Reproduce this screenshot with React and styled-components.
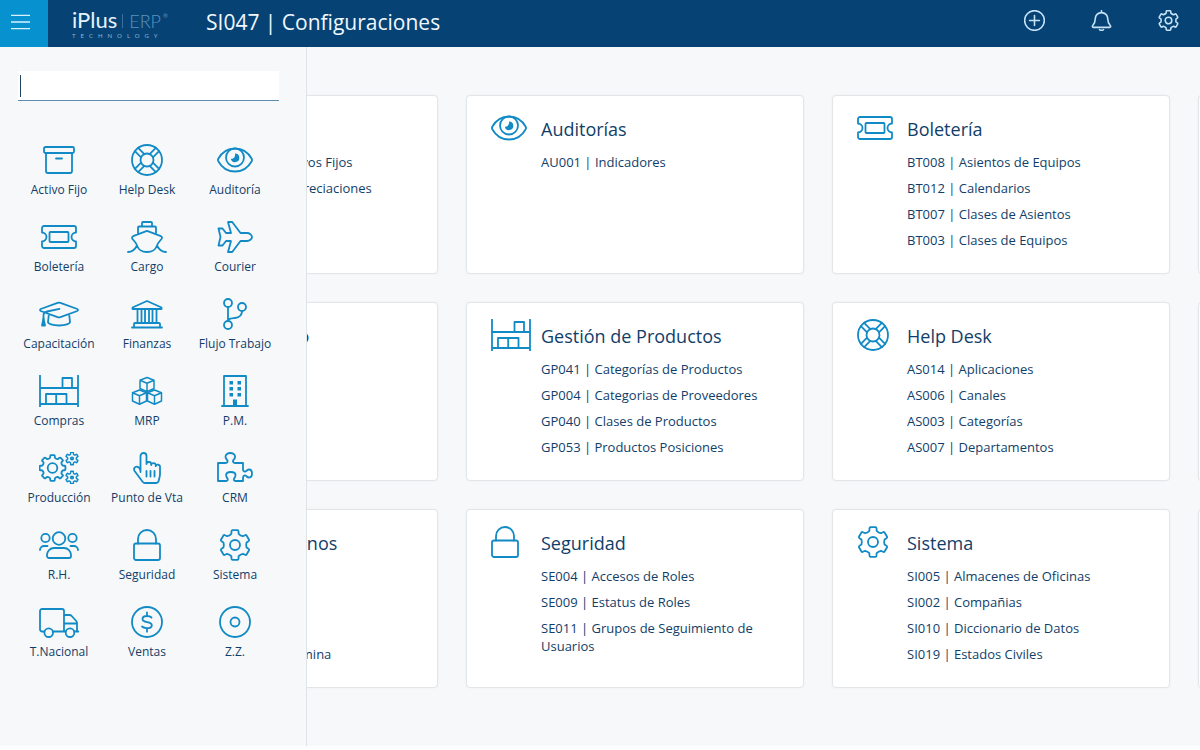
import styled, { createGlobalStyle } from "styled-components";

const gear = (cx, cy, teeth, outer, root) => {
  const step = 360 / teeth;
  const at = (deg, r) => {
    const a = ((deg - 90) * Math.PI) / 180;
    return `${(cx + r * Math.cos(a)).toFixed(2)} ${(cy + r * Math.sin(a)).toFixed(2)}`;
  };
  let d = "";
  for (let i = 0; i < teeth; i++) {
    const a = i * step;
    d += `${i ? "L" : "M"}${at(a - step * 0.3, root)}`;
    d += `L${at(a - step * 0.24, outer - 1)}Q${at(a - step * 0.23, outer)} ${at(a - step * 0.16, outer)}`;
    d += `L${at(a + step * 0.16, outer)}Q${at(a + step * 0.23, outer)} ${at(a + step * 0.24, outer - 1)}`;
    d += `L${at(a + step * 0.3, root)}Q${at(a + step * 0.5, root - 1)} ${at(a + step * 0.7, root)}`;
  }
  return d + "Z";
};

const CUBE = "M0-7 7-4.2V4L0 7.2-7 4v-8.200zM-7-4.200 0-1.200 7-4.200M0-1.200V7.200";

const ICONS = {
  archive: {
    width: 32,
    art: (
      <>
        <rect x="1" y="3" width="30" height="6" rx="1.5" />
        <path d="M3 9v18a2 2 0 0 0 2 2h22a2 2 0 0 0 2-2V9M13 14.500h6" />
      </>
    ),
  },
  lifering: {
    width: 32,
    art: (
      <>
        <circle cx="16" cy="16" r="15" />
        <circle cx="16" cy="16" r="6.500" />
        <path
          transform="rotate(45 16 16)"
          d="M22.100 13.700h8.700M22.100 18.300h8.700M1.200 13.700h8.700M1.200 18.300h8.700M13.700 22.100v8.700M18.300 22.100v8.700M13.700 1.200v8.700M18.300 1.200v8.700"
        />
      </>
    ),
  },
  eye: {
    width: 36,
    art: (
      <>
        <path d="M1.300 17.200a2.500 2.500 0 0 1 0-2.400C4.500 9 10.500 4.500 18 4.500S31.500 9 34.700 14.800a2.500 2.500 0 0 1 0 2.400C31.500 23 25.500 27.500 18 27.500S4.500 23 1.300 17.200z" />
        <circle cx="18" cy="13.500" r="9" />
        <path fill="currentColor" stroke="none" d="M18 9.500a4.300 4.300 0 1 1-4.200 5.200c2.200.6 4.800-1.300 4.200-5.200z" />
      </>
    ),
  },
  ticket: {
    width: 36,
    art: (
      <>
        <path d="M3 5h30a2 2 0 0 1 2 2v4.500a4.500 4.500 0 0 0 0 9V25a2 2 0 0 1-2 2H3a2 2 0 0 1-2-2v-4.500a4.500 4.500 0 0 0 0-9V7a2 2 0 0 1 2-2z" />
        <rect x="8.500" y="11" width="19" height="10" rx="1" />
      </>
    ),
  },
  ship: {
    width: 40,
    art: (
      <path d="M1 31c4 0 7-2.500 9-6.500 1.500 4 3.500 6.500 10 6.500s8.500-2.500 10-6.500c2 4 5 6.500 9 6.500M10 24.500c-1-3-2.500-4-4.500-6.500-.9-1.200-.5-2.300.6-2.800L20 9.800l13.900 5.400c1.100.5 1.500 1.600.6 2.800-2 2.500-3.500 3.500-4.500 6.500M11 13V6.500a1 1 0 0 1 1-1h16a1 1 0 0 1 1 1V13M15 5.500V2a1 1 0 0 1 1-1h8a1 1 0 0 1 1 1v3.500" />
    ),
  },
  plane: {
    width: 36,
    art: (
      <path d="M11 1h4.200l8.300 11H30c2.500 0 5 1.800 5 4s-2.500 4-5 4h-6.500l-8.300 11H11l3-11H9l-3.500 4.500h-4L3.500 16l-2-8.500h4L9 12h5z" />
    ),
  },
  cap: {
    width: 40,
    art: (
      <>
        <path d="M18.600 4.800a4 4 0 0 1 2.800 0L38.300 11c.9.4.9 1.600 0 2L21.400 19.200a4 4 0 0 1-2.800 0L1.700 13c-.9-.4-.9-1.600 0-2zM20.500 10.800 8 13.500c-2.300.5-3.500 1.700-3.500 4V21M9.800 17 9 24c0 1.800 4.500 3.500 11 3.500s11-1.700 11-3.500l-.8-7" />
        <path fill="currentColor" d="M4.500 20.500 3 27.500h3z" />
      </>
    ),
  },
  bank: {
    width: 32,
    art: (
      <path d="M1.500 11V9.500L16 3l14.500 6.500V11zM6.500 11v14M10.500 11v14M14 11v14M18 11v14M21.500 11v14M25.500 11v14M1 29.500h30M3 29.500V26a1 1 0 0 1 1-1h24a1 1 0 0 1 1 1v3.500" />
    ),
  },
  branch: {
    width: 24,
    art: (
      <>
        <circle cx="5" cy="5" r="4" />
        <circle cx="19" cy="9" r="4" />
        <circle cx="5" cy="27" r="4" />
        <path d="M5 9v14M19 13c0 5-2.500 6.500-7 7s-7 .5-7 3" />
      </>
    ),
  },
  shelves: {
    width: 40,
    art: (
      <path strokeLinecap="butt" d="M1 0v32M39 0v32M1 13h38M1 29h38M23.500 13V3h9.500v10M7 29V19h20.500v10M17.200 19v10" />
    ),
  },
  cubes: {
    width: 32,
    art: (
      <g strokeWidth="1.500">
        <path transform="translate(16 9.500)" d={CUBE} />
        <path transform="translate(8.500 22)" d={CUBE} />
        <path transform="translate(23.500 22)" d={CUBE} />
      </g>
    ),
  },
  building: {
    width: 28,
    art: (
      <>
        <path d="M1 31h26M3 31V1h22v30" />
        <path
          fill="currentColor"
          stroke="none"
          d="M8.500 6h3.500v3.500H8.500zM16.500 6H20v3.500h-3.500zM8.500 12h3.500v3.500H8.500zM16.500 12H20v3.500h-3.500zM8.500 18h3.500v3.500H8.500zM16.500 18H20v3.500h-3.500zM12 24.500h4V31h-4z"
        />
      </>
    ),
  },
  gears: {
    width: 40,
    art: (
      <>
        <path d={gear(13.500, 16, 8, 13, 10.500)} />
        <circle cx="13.500" cy="16" r="4.800" />
        <path strokeWidth="1.500" d={gear(33, 6.500, 6, 6.300, 4.800)} />
        <path strokeWidth="1.500" d={gear(33, 25.500, 6, 6.300, 4.800)} />
        <circle cx="33" cy="6.500" r="1.200" />
        <circle cx="33" cy="25.500" r="1.200" />
      </>
    ),
  },
  hand: {
    width: 28,
    art: (
      <path d="M7.500 20V4a3 3 0 0 1 6 0v8c0-2.700 4.700-2.700 4.700 0v1c0-2.500 4.500-2.500 4.500 0v1.200c0-2.300 4.300-2.200 4.300.6V22c0 1-.2 2-.4 3l-1 4a2.500 2.500 0 0 1-2.400 2H12a3 3 0 0 1-2.400-1.200L1.600 19c-1.500-2.200.5-5 3-4.200 1.400.5 2.900 2.200 2.900 5.200M13.500 19v5.500M17.500 19v5.500M21.500 19v5.500" />
    ),
  },
  puzzle: {
    width: 36,
    art: (
      <path d="M1 11h7c2 0 3-1 2.500-2.500C10 7.500 8.500 7 8.500 4.800 8.500 2.500 10.800 1 13.300 1s4.800 1.500 4.800 3.800c0 2.200-1.500 2.700-2 3.700-.5 1.500.5 2.500 2.500 2.500H26v6c0 2 1 3 2.500 2.500 1-.4 1.500-2 3.500-2 1.800 0 3 1.500 3 4s-1.200 4-3 4c-2 0-2.500-1.600-3.500-2-1.500-.5-2.500.5-2.500 2.500v3h-7.500c-1.500 0-2-1-1.500-2.300.5-1 1.500-1.700 1.500-3.400 0-2-2-3.300-4.700-3.300s-4.700 1.300-4.700 3.300c0 1.700 1 2.400 1.500 3.400.5 1.300 0 2.300-1.500 2.300H1z" />
    ),
  },
  users: {
    width: 40,
    art: (
      <>
        <circle cx="20" cy="9.500" r="6.300" />
        <circle cx="6.500" cy="9" r="4.200" />
        <circle cx="33.500" cy="9" r="4.200" />
        <path d="M15 19h10a7 7 0 0 1 7 7v1a2 2 0 0 1-2 2H10a2 2 0 0 1-2-2v-1a7 7 0 0 1 7-7zM1 21c0-2.500 2-4 4.200-4H8.500M39 21c0-2.500-2-4-4.200-4h-3.300" />
      </>
    ),
  },
  lock: {
    width: 28,
    art: (
      <>
        <rect x="1" y="14.500" width="26" height="16.500" rx="2" />
        <path d="M5 14.500V10a9 9 0 0 1 18 0v4.500" />
      </>
    ),
  },
  cog: {
    width: 32,
    art: (
      <>
        <path d={gear(16, 16, 6, 15, 11.800)} />
        <circle cx="16" cy="16" r="5" />
      </>
    ),
  },
  truck: {
    width: 40,
    art: (
      <>
        <path d="M5.300 25.500H3a2 2 0 0 1-2-2V5a2 2 0 0 1 2-2h20a2 2 0 0 1 2 2v20.500M14 25.500h12.500M25 9h5.500a3 3 0 0 1 2.200 1l4.500 5a3 3 0 0 1 .8 2v8.500M35.500 25.500h4M25 17.500h13" />
        <circle cx="9.700" cy="26.700" r="4.300" />
        <circle cx="31" cy="26.700" r="4.300" />
      </>
    ),
  },
  dollar: {
    width: 32,
    art: (
      <>
        <circle cx="16" cy="16" r="15" />
        <path d="M20.500 11.500c-1-1-2.700-1.500-4.500-1.500-2.600 0-4.500 1-4.500 3 0 4.500 9.300 1.800 9.300 6.200 0 2-2 3-4.800 3-2 0-3.800-.7-5-1.700M16 6.500V10M16 22.200v3.500" />
      </>
    ),
  },
  disc: {
    width: 32,
    art: (
      <>
        <circle cx="16" cy="16" r="15" />
        <circle cx="16" cy="16" r="4.500" />
      </>
    ),
  },
  plus: {
    width: 32,
    art: (
      <>
        <circle cx="16" cy="16" r="15" />
        <path d="M16 8.500v15M8.500 16h15" />
      </>
    ),
  },
  bell: {
    width: 32,
    art: (
      <path d="M16 1v3M16 4c-5.500 0-9.500 4-9.500 9.500 0 6-1.500 8-4 10.500-.9 1-.3 2.500 1 2.500h25c1.300 0 1.900-1.500 1-2.500-2.500-2.500-4-4.500-4-10.500C25.500 8 21.500 4 16 4zM13 30c.8 1.300 5.200 1.300 6 0" />
    ),
  },
};

const MODULES = [
  ["archive", "Activo Fijo"],
  ["lifering", "Help Desk"],
  ["eye", "Auditoría"],
  ["ticket", "Boletería"],
  ["ship", "Cargo"],
  ["plane", "Courier"],
  ["cap", "Capacitación"],
  ["bank", "Finanzas"],
  ["branch", "Flujo Trabajo"],
  ["shelves", "Compras"],
  ["cubes", "MRP"],
  ["building", "P.M."],
  ["gears", "Producción"],
  ["hand", "Punto de Vta"],
  ["puzzle", "CRM"],
  ["users", "R.H."],
  ["lock", "Seguridad"],
  ["cog", "Sistema"],
  ["truck", "T.Nacional"],
  ["dollar", "Ventas"],
  ["disc", "Z.Z."],
];

const CARDS = [
  {
    id: "af",
    icon: "archive",
    title: "Activo Fijo",
    items: ["AF003 | Cuentas Activos Fijos", "AF005 | Cuentas Depreciaciones"],
  },
  { id: "au", icon: "eye", title: "Auditorías", items: ["AU001 | Indicadores"] },
  {
    id: "bt",
    icon: "ticket",
    title: "Boletería",
    items: [
      "BT008 | Asientos de Equipos",
      "BT012 | Calendarios",
      "BT007 | Clases de Asientos",
      "BT003 | Clases de Equipos",
    ],
  },
  { id: "next1" },
  { id: "ft", icon: "branch", title: "Flujo de Trabajo", items: [] },
  {
    id: "gp",
    icon: "shelves",
    title: "Gestión de Productos",
    items: [
      "GP041 | Categorías de Productos",
      "GP004 | Categorias de Proveedores",
      "GP040 | Clases de Productos",
      "GP053 | Productos Posiciones",
    ],
  },
  {
    id: "as",
    icon: "lifering",
    title: "Help Desk",
    items: ["AS014 | Aplicaciones", "AS006 | Canales", "AS003 | Categorías", "AS007 | Departamentos"],
  },
  { id: "next2" },
  {
    id: "rh",
    icon: "users",
    title: "Recursos Humanos",
    items: ["RH001 | Áreas", "RH002 | Cargos", "RH003 | Turnos", "RH004 | Tipos de Nómina"],
  },
  {
    id: "se",
    icon: "lock",
    title: "Seguridad",
    items: ["SE004 | Accesos de Roles", "SE009 | Estatus de Roles", "SE011 | Grupos de Seguimiento de Usuarios"],
  },
  {
    id: "si",
    icon: "cog",
    title: "Sistema",
    items: [
      "SI005 | Almacenes de Oficinas",
      "SI002 | Compañias",
      "SI010 | Diccionario de Datos",
      "SI019 | Estados Civiles",
    ],
  },
  { id: "next3" },
];

const Icon = ({ name, size = 32 }) => {
  const { width, art } = ICONS[name];
  return (
    <IconSvg viewBox={`0 0 ${width} 32`} width={(width * size) / 32} height={size} aria-hidden="true">
      {art}
    </IconSvg>
  );
};

const Logo = () => (
  <LogoLink href="#inicio">
    <LogoTop>
      <Brand>iPlus</Brand>
      <Product>ERP</Product>
      <Mark>®</Mark>
    </LogoTop>
    <Tagline>TECHNOLOGY</Tagline>
  </LogoLink>
);

const Card = ({ card }) => (
  <CardBox>
    {card.title && (
      <>
        <Icon name={card.icon} />
        <CardBody>
          <CardTitle>{card.title}</CardTitle>
          <CardList>
            {card.items.map((item) => (
              <li key={item}>
                <ItemLink href={`#${item.slice(0, 5)}`}>{item}</ItemLink>
              </li>
            ))}
          </CardList>
        </CardBody>
      </>
    )}
  </CardBox>
);

export default function App() {
  return (
    <>
      <GlobalStyle />
      <Page>
        <Header>
          <MenuButton type="button" aria-label="Menú">
            <MenuSvg viewBox="0 0 20 16" aria-hidden="true">
              <path d="M0 1h20M0 8h20M0 15h20" />
            </MenuSvg>
          </MenuButton>
          <Logo />
          <Title>SI047 | Configuraciones</Title>
          <Actions>
            <ActionButton type="button" aria-label="Agregar">
              <Icon name="plus" size={21} />
            </ActionButton>
            <ActionButton type="button" aria-label="Notificaciones">
              <Icon name="bell" size={21} />
            </ActionButton>
            <ActionButton type="button" aria-label="Ajustes">
              <Icon name="cog" size={21} />
            </ActionButton>
          </Actions>
        </Header>
        <Content>
          <Board>
            {CARDS.map((card) => (
              <Card key={card.id} card={card} />
            ))}
          </Board>
          <Drawer>
            <SearchBox>
              <Caret />
              <SearchInput type="text" aria-label="Buscar" />
            </SearchBox>
            <ModuleGrid>
              {MODULES.map(([icon, label]) => (
                <ModuleLink key={label} href={`#${icon}`}>
                  <Icon name={icon} />
                  <ModuleLabel>{label}</ModuleLabel>
                </ModuleLink>
              ))}
            </ModuleGrid>
          </Drawer>
        </Content>
      </Page>
    </>
  );
}

const GlobalStyle = createGlobalStyle`
  * {
    box-sizing: border-box;
  }

  body {
    margin: 0;
    background: #ffffff;
    color: #113e69;
    font-family: "Open Sans", "Noto Sans", sans-serif;
  }
`;

const Page = styled.div`
  display: flex;
  flex-direction: column;
  min-height: calc(100vh - 4px);
  background: #f7f8f9;
`;

const Header = styled.header`
  display: flex;
  align-items: center;
  height: 47px;
  background: #064374;
`;

const MenuButton = styled.button`
  display: flex;
  align-items: center;
  align-self: stretch;
  width: 48px;
  padding: 0 0 4px 11px;
  border: 0;
  background: #0791cf;
  cursor: pointer;
`;

const MenuSvg = styled.svg`
  width: 19px;
  height: 16px;
  fill: none;
  stroke: #d9f1ff;
  stroke-width: 1.5;
`;

const IconSvg = styled.svg`
  flex: none;
  fill: none;
  stroke: currentColor;
  stroke-width: 1.8;
  stroke-linecap: round;
  stroke-linejoin: round;
  color: #128ac6;
`;

const LogoLink = styled.a`
  display: block;
  width: 134px;
  padding-left: 24px;
  color: #e4f3ff;
  font-family: Lato, sans-serif;
  text-decoration: none;
`;

const LogoTop = styled.span`
  display: flex;
  align-items: baseline;
  height: 24px;
  line-height: 24px;
`;

const Brand = styled.span`
  font-size: 22px;
`;

const Product = styled.span`
  margin-left: 5px;
  padding-left: 6px;
  border-left: 1px solid #3c7099;
  color: #5c93be;
  font-size: 18px;
  font-weight: 300;
  line-height: 14px;
`;

const Mark = styled.span`
  align-self: flex-start;
  margin-left: 2px;
  color: #5c93be;
  font-size: 6px;
  line-height: 16px;
`;

const Tagline = styled.span`
  display: block;
  color: #8fb6d6;
  font-size: 6px;
  line-height: 8px;
  letter-spacing: 5px;
`;

const Title = styled.h1`
  flex: 1;
  margin: 0;
  padding: 0 0 4px 24px;
  color: #f0f8ff;
  font-size: 21px;
  font-weight: 400;
  line-height: 28px;
`;

const Actions = styled.div`
  display: flex;
  gap: 46px;
  padding: 0 21px 6px 0;
`;

const ActionButton = styled.button`
  display: flex;
  padding: 0;
  border: 0;
  background: none;
  cursor: pointer;

  ${IconSvg} {
    color: #c5e2f8;
    stroke-width: 2.4;
  }
`;

const Content = styled.div`
  position: relative;
  flex: 1;
  overflow: hidden;
`;

const Board = styled.main`
  display: grid;
  grid-template-columns: repeat(4, minmax(338px, 1fr));
  grid-auto-rows: minmax(179px, auto);
  gap: 28px;
  padding: 48px 0 48px 100px;
`;

const CardBox = styled.section`
  display: grid;
  grid-template-columns: 50px 1fr;
  align-items: start;
  padding: 16px 24px;
  border: 1px solid #e3e6e9;
  border-radius: 4px;
  background: #ffffff;
  box-shadow: 0 0 2px #e9ecef;
`;

const CardBody = styled.div`
  padding-top: 5px;
`;

const CardTitle = styled.h2`
  margin: 0;
  font-size: 18px;
  font-weight: 400;
  line-height: 24px;
`;

const CardList = styled.ul`
  display: flex;
  flex-direction: column;
  gap: 8px;
  margin: 12px 0 0;
  padding: 0;
  list-style: none;
  font-size: 13px;
  line-height: 18px;
`;

const ItemLink = styled.a`
  display: block;
  color: inherit;
  text-decoration: none;
`;

const Drawer = styled.nav`
  position: absolute;
  top: 0;
  bottom: 0;
  left: 0;
  width: 307px;
  padding: 24px 27px 0 15px;
  border-right: 1px solid #e0e3e6;
  background: #f7f8f9;
`;

const SearchBox = styled.div`
  display: flex;
  align-items: center;
  height: 30px;
  margin: 0 0 43px 3px;
  padding-left: 2px;
  border-bottom: 1px solid #5d8bad;
  background: #ffffff;
`;

const Caret = styled.span`
  width: 1px;
  height: 22px;
  background: #23455f;
`;

const SearchInput = styled.input`
  flex: 1;
  min-width: 0;
  height: 100%;
  padding: 0 4px;
  border: 0;
  outline: 0;
  background: none;
  color: inherit;
  font: inherit;
  font-size: 14px;
`;

const ModuleGrid = styled.div`
  display: grid;
  grid-template-columns: repeat(3, 1fr);
  row-gap: 23px;
`;

const ModuleLink = styled.a`
  display: flex;
  flex-direction: column;
  align-items: center;
  gap: 6px;
  color: inherit;
  text-decoration: none;
`;

const ModuleLabel = styled.span`
  font-size: 12px;
  line-height: 16px;
  white-space: nowrap;
`;
